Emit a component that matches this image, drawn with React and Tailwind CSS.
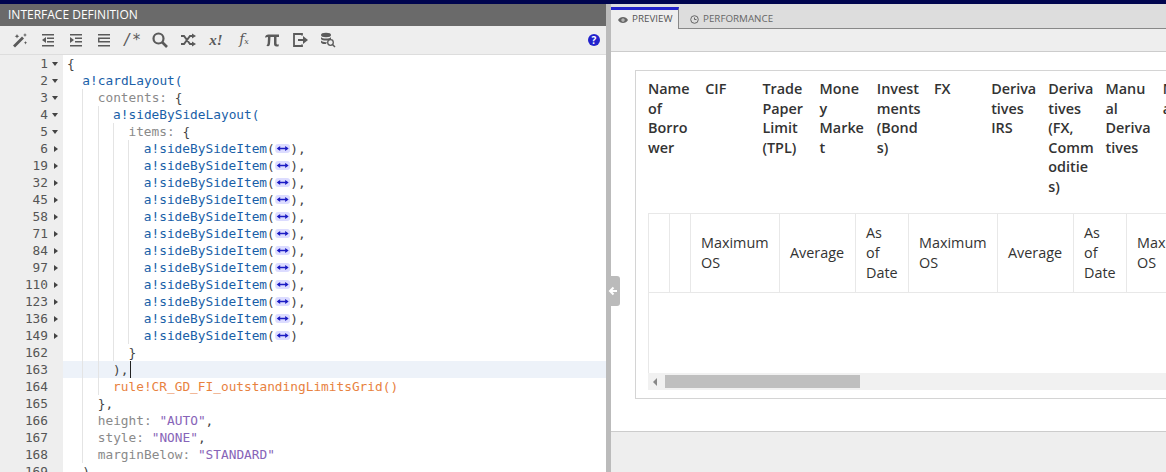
import React from 'react';

const ui = { fontFamily: '"Open Sans", sans-serif' };
const mono = { fontFamily: '"DejaVu Sans Mono", monospace' };

const Blue = ({ children }) => <span className="text-[#1a5fa8]">{children}</span>;
const Key = ({ children }) => <span className="text-[#8a8a8a]">{children}</span>;
const Str = ({ children }) => <span className="text-[#8764b8]">{children}</span>;
const Orange = ({ children }) => <span className="text-[#e8823f]">{children}</span>;

function Fold() {
  return (
    <svg width="15.36" height="11" viewBox="0 0 15 11" className="inline-block align-[-1px]">
      <rect x="0" y="1" width="15" height="9" rx="3" fill="#dcdcff" />
      <path d="M3 5.500h9" stroke="#1c1cc4" strokeWidth="1.500" />
      <path d="M1.500 5.500L5 3v5zM13.500 5.500L10 3v5z" fill="#1c1cc4" />
    </svg>
  );
}

function SideItem({ last }) {
  return <><Blue>a!sideBySideItem</Blue>(<Fold />){last ? '' : ','}</>;
}

// gutter number, fold arrow, indent level, line content
const lines = [
  { n: 1, f: 'd', i: 0, c: '{' },
  { n: 2, f: 'd', i: 1, c: <Blue>a!cardLayout(</Blue> },
  { n: 3, f: 'd', i: 2, c: <><Key>contents:</Key> {'{'}</> },
  { n: 4, f: 'd', i: 3, c: <Blue>a!sideBySideLayout(</Blue> },
  { n: 5, f: 'd', i: 4, c: <><Key>items:</Key> {'{'}</> },
  ...[6, 19, 32, 45, 58, 71, 84, 97, 110, 123, 136].map((n) => ({ n, f: 'r', i: 5, c: <SideItem /> })),
  { n: 149, f: 'r', i: 5, c: <SideItem last /> },
  { n: 162, i: 4, c: '}' },
  { n: 163, i: 3, c: <>),<span className="ml-[1px] inline-block h-[17px] w-[1px] bg-[#222] align-top" /></>, active: true },
  { n: 164, i: 3, c: <Orange>rule!CR_GD_FI_outstandingLimitsGrid()</Orange> },
  { n: 165, i: 2, c: '},' },
  { n: 166, i: 2, c: <><Key>height:</Key> <Str>"AUTO"</Str>,</> },
  { n: 167, i: 2, c: <><Key>style:</Key> <Str>"NONE"</Str>,</> },
  { n: 168, i: 2, c: <><Key>marginBelow:</Key> <Str>"STANDARD"</Str></> },
  { n: 169, i: 1, c: ')' },
];

function Editor() {
  return (
    <div className="flex-1 overflow-hidden bg-white text-[12.8px] text-[#444]" style={mono}>
      {lines.map((l) => (
        <div key={l.n} className="flex h-[17px] leading-[17px]">
          <div className="relative w-[63px] shrink-0 bg-[#eeeeee] pr-[15px] text-right text-[#555]">
            {l.n}
            {l.f === 'd' && <span className="absolute right-[5px] top-[7px] h-0 w-0 border-x-[3px] border-t-[4px] border-x-transparent border-t-[#444]" />}
            {l.f === 'r' && <span className="absolute right-[5px] top-[6px] h-0 w-0 border-y-[3px] border-l-[4px] border-y-transparent border-l-[#444]" />}
          </div>
          <div className={`relative flex-1 whitespace-pre pl-[4px] ${l.active ? 'bg-[#edf2f9]' : ''}`}>
            {Array.from({ length: l.i }).map((_, k) => (
              <span key={k} className={`inline-block h-[17px] w-[15.36px] align-top ${k > 0 ? 'border-l border-[#e4e4e4]' : ''}`} />
            ))}
            {l.c}
          </div>
        </div>
      ))}
    </div>
  );
}

function ToolIcon({ children }) {
  return <svg width="18" height="18" viewBox="0 0 18 18" fill="#5a5a5a" stroke="#5a5a5a" strokeWidth="0">{children}</svg>;
}

function IndentIcon({ dir }) {
  return (
    <ToolIcon>
      <path d="M3 3h12v1.500H3zM3 14h12v1.500H3zM8 6.500h7V8H8zM8 10h7v1.500H8z" />
      {dir === 'l' && <path d="M3 9l4-3v6z" />}
      {dir === 'r' && <path d="M7 9L3 6v6z" />}
      {dir === 'f' && <path d="M3 6.500h1.500v5H3zM3 6.500h5V8H3zM3 10h5v1.500H3z" />}
    </ToolIcon>
  );
}

function Toolbar() {
  return (
    <div className="flex h-[29px] items-center border-b border-[#dddddd] bg-[#eeeeee] pl-[11px] pr-[6px] text-[#5a5a5a]">
      <div className="flex items-center gap-[10px]">
        <ToolIcon>
          <path d="M2 14.500L11 5.500l2 2-9 9zM6 3l.7 1.600L8.300 5.300 6.700 6 6 7.600 5.300 6 3.700 5.300 5.300 4.600zM14 2l.6 1.400L16 4l-1.400.6L14 6l-.6-1.400L12 4l1.400-.6zM14.500 10l.5 1.200 1.200.5-1.200.5-.5 1.200-.5-1.200-1.200-.5 1.200-.5z" />
        </ToolIcon>
        <IndentIcon dir="l" />
        <IndentIcon dir="r" />
        <IndentIcon dir="f" />
        <span className="w-[18px] text-center text-[15px] italic leading-[18px]" style={mono}>/*</span>
        <ToolIcon>
          <circle cx="7.500" cy="7.500" r="5" fill="none" strokeWidth="2.200" />
          <path d="M11 11l5 5" strokeWidth="2.600" fill="none" />
        </ToolIcon>
        <ToolIcon>
          <path d="M2 5h3l6 8h3M2 13h3l6-8h3" fill="none" strokeWidth="2" />
          <path d="M13 2.500l4 2.500-4 2.500zM13 10.500l4 2.500-4 2.500z" />
        </ToolIcon>
        <span className="w-[18px] text-center text-[15px] font-bold italic leading-[18px]" style={{ fontFamily: '"Liberation Serif", serif' }}>x!</span>
        <span className="w-[18px] text-center text-[14px] italic leading-[18px]" style={{ fontFamily: '"DejaVu Serif", serif' }}>f<span className="text-[8px]">x</span></span>
        <ToolIcon>
          <path d="M2 6.500C2.300 4.500 3.500 3.500 5.500 3.500H16V6h-2.500v6c0 1 .4 1.500 1.300 1.500l.9-.2v1.900c-.8.3-1.500.4-2.200.4-1.700 0-2.500-1-2.500-2.800V6H7.500l-.4 6c-.1 2-.8 3.300-2.100 3.300-.7 0-1.300-.2-1.700-.5.9-.6 1.300-1.600 1.400-3L5 6c-1 0-1.800.2-2.300.5z" />
        </ToolIcon>
        <ToolIcon>
          <path d="M11 4.500V3H3v12h8v-1.500" fill="none" strokeWidth="1.800" />
          <path d="M7 8h5V5l5 4-5 4v-3H7z" />
        </ToolIcon>
        <ToolIcon>
          <ellipse cx="7" cy="4" rx="5" ry="2.200" />
          <path d="M2 6c1 2 9 2 10 0v2c-1 2-9 2-10 0zM2 9.500c1 1.500 5 2 6 1.500l-1 2c-2 .3-4 0-5-1.500z" />
          <circle cx="11.500" cy="11.500" r="2.800" fill="none" strokeWidth="1.300" />
          <path d="M13.500 13.500l2.500 2.500" fill="none" strokeWidth="1.500" />
        </ToolIcon>
      </div>
      <div className="ml-auto flex h-[12px] w-[12px] items-center justify-center rounded-full bg-[#2222cc] text-[10px] font-bold leading-none text-white" style={ui}>?</div>
    </div>
  );
}

function Tabs() {
  return (
    <>
      <div className="flex h-[25px] bg-[#dddddd] pt-[3px] text-[9.8px] uppercase" style={ui}>
        <div className="flex h-[22px] w-[68px] items-center gap-[4px] border-r border-t-[3px] border-r-[#888] border-t-[#2222cc] bg-[#eeeeee] pl-[7px] text-[#555]">
          <svg width="10" height="8" viewBox="0 0 10 8" fill="#666"><path d="M0 4c2-4 8-4 10 0-2 4-8 4-10 0z" /><circle cx="5" cy="4" r="1.500" fill="#eee" /><circle cx="5" cy="4" r=".8" /></svg>
          Preview
        </div>
        <div className="flex h-[22px] flex-1 items-center gap-[4px] border-b border-[#888] pl-[11px] pt-[3px] text-[#666]">
          <svg width="9" height="9" viewBox="0 0 9 9" fill="none" stroke="#666"><circle cx="4.500" cy="4.500" r="3.800" /><path d="M4.500 2.500v2h2" /></svg>
          Performance
        </div>
      </div>
      <div className="h-[23px] border-b border-[#cccccc] bg-[#eeeeee]" />
    </>
  );
}

const headers = [
  'Name of Borrower',
  'CIF',
  'Trade Paper Limit (TPL)',
  'Money Market',
  'Investments (Bonds)',
  'FX',
  'Derivatives IRS',
  'Derivatives (FX, Commodities)',
  'Manual Derivatives',
  'Manual',
];

const subCols = [
  [21, ''],
  [21, ''],
  [89, 'Maximum OS'],
  [76, 'Average'],
  [53, 'As of Date'],
  [89, 'Maximum OS'],
  [76, 'Average'],
  [53, 'As of Date'],
  [60, 'Maximum OS'],
];

function Grid() {
  return (
    <div className="h-[329px] overflow-hidden border border-r-0 border-[#d4d4d4] pl-[12px] text-[14.4px] text-[#333]">
      <div className="flex h-[142px] gap-[11.700px] pt-[8px] font-semibold leading-[19.500px]">
        {headers.map((t) => (
          <div key={t} className="w-[45.500px] shrink-0 break-words">{t}</div>
        ))}
      </div>
      <div className="flex h-[80px] border-y border-[#e8e8e8]">
        {subCols.map(([w, t], i) => (
          <div key={i} className="flex shrink-0 items-center border-l border-[#e8e8e8] px-[10px] leading-[20px]" style={{ width: w }}>
            {t}
          </div>
        ))}
      </div>
      <div className="h-[80px] border-l border-[#e8e8e8]" />
      <div className="flex h-[17px] items-center bg-[#f1f1f1] pl-[5px]">
        <span className="h-0 w-0 border-y-[4px] border-r-[4px] border-y-transparent border-r-[#888]" />
        <div className="ml-[8px] h-[13px] w-[195px] bg-[#bfbfbf]" />
      </div>
    </div>
  );
}

export default function App() {
  return (
    <div className="flex h-[472px] w-[1166px] flex-col overflow-hidden bg-white" style={ui}>
      <div className="h-[4px] bg-[#00054f]" />
      <div className="flex min-h-0 flex-1">
        <div className="flex w-[606px] shrink-0 flex-col">
          <div className="flex h-[22px] items-center bg-[#6a6a6a] pl-[8px] text-[12px] text-white">INTERFACE DEFINITION</div>
          <Toolbar />
          <Editor />
        </div>
        <div className="relative w-[5px] shrink-0 bg-[#bbbbbb]">
          <div className="absolute left-0 top-[272px] flex h-[30px] w-[14px] items-center justify-center rounded-r-[3px] bg-[#bbbbbb]">
            <svg width="10" height="10" viewBox="0 0 10 10" fill="none" stroke="#fff" strokeWidth="2"><path d="M9 5H2M5.500 1.500L2 5l3.500 3.500" /></svg>
          </div>
        </div>
        <div className="flex min-w-0 flex-1 flex-col">
          <Tabs />
          <div className="h-[380px] border-b border-[#cccccc] bg-white pl-[24px] pt-[18px]">
            <Grid />
          </div>
          <div className="flex-1 bg-[#eeeeee]" />
        </div>
      </div>
    </div>
  );
}
